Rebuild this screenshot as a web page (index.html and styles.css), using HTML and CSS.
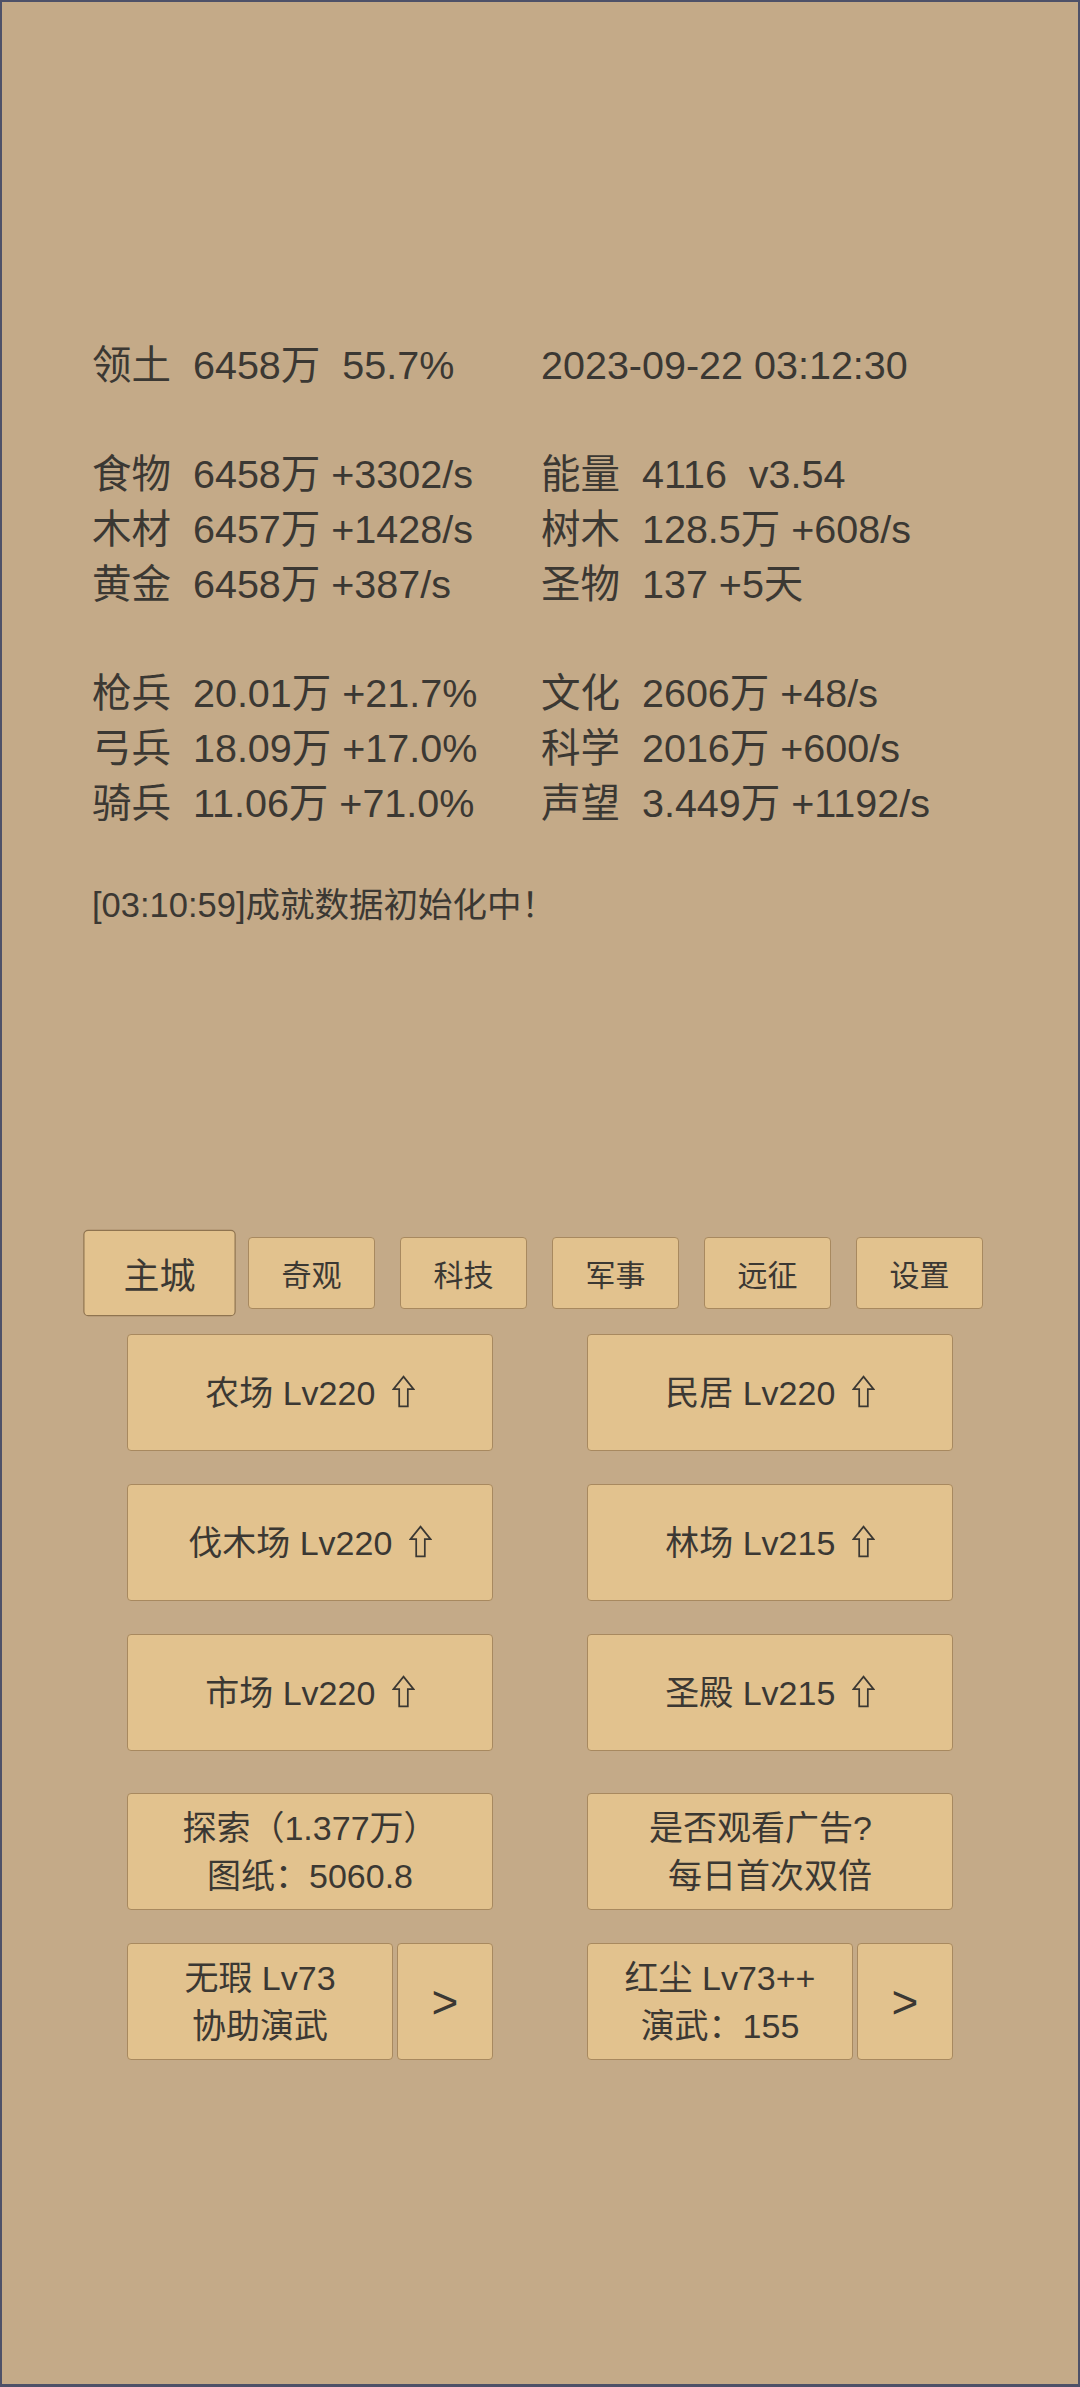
FILE: index.html
```html
<!DOCTYPE html>
<html lang="zh-CN">
<head>
  <meta charset="UTF-8">
  <meta name="viewport" content="width=device-width, initial-scale=1.0">
  <title>主城</title>
  <link rel="stylesheet" href="styles.css">
</head>
<body>
  <div class="frame">

    <section class="stats">
      <div class="group">
        <p>领土  6458万  55.7%</p>
        <p>2023-09-22 03:12:30</p>
      </div>
      <div class="group">
        <p>食物  6458万 +3302/s</p>
        <p>能量  4116  v3.54</p>
        <p>木材  6457万 +1428/s</p>
        <p>树木  128.5万 +608/s</p>
        <p>黄金  6458万 +387/s</p>
        <p>圣物  137 +5天</p>
      </div>
      <div class="group">
        <p>枪兵  20.01万 +21.7%</p>
        <p>文化  2606万 +48/s</p>
        <p>弓兵  18.09万 +17.0%</p>
        <p>科学  2016万 +600/s</p>
        <p>骑兵  11.06万 +71.0%</p>
        <p>声望  3.449万 +1192/s</p>
      </div>
      <p class="log">[03:10:59]成就数据初始化中！</p>
    </section>

    <nav class="tabs">
      <button class="tab active">主城</button>
      <button class="tab">奇观</button>
      <button class="tab">科技</button>
      <button class="tab">军事</button>
      <button class="tab">远征</button>
      <button class="tab">设置</button>
    </nav>

    <section class="grid buildings">
      <button class="btn">农场 Lv220 <svg class="up" viewBox="0 0 24 34"><path d="M12 1.5 L22.5 14.5 H16.5 V32.5 H7.5 V14.5 H1.5 Z"/></svg></button>
      <button class="btn">民居 Lv220 <svg class="up" viewBox="0 0 24 34"><path d="M12 1.5 L22.5 14.5 H16.5 V32.5 H7.5 V14.5 H1.5 Z"/></svg></button>
      <button class="btn">伐木场 Lv220 <svg class="up" viewBox="0 0 24 34"><path d="M12 1.5 L22.5 14.5 H16.5 V32.5 H7.5 V14.5 H1.5 Z"/></svg></button>
      <button class="btn">林场 Lv215 <svg class="up" viewBox="0 0 24 34"><path d="M12 1.5 L22.5 14.5 H16.5 V32.5 H7.5 V14.5 H1.5 Z"/></svg></button>
      <button class="btn">市场 Lv220 <svg class="up" viewBox="0 0 24 34"><path d="M12 1.5 L22.5 14.5 H16.5 V32.5 H7.5 V14.5 H1.5 Z"/></svg></button>
      <button class="btn">圣殿 Lv215 <svg class="up" viewBox="0 0 24 34"><path d="M12 1.5 L22.5 14.5 H16.5 V32.5 H7.5 V14.5 H1.5 Z"/></svg></button>
    </section>

    <section class="grid extras">
      <button class="btn">探索（1.377万）<br>图纸：5060.8</button>
      <button class="btn">是否观看广告?&nbsp;&nbsp;<br>每日首次双倍</button>
      <div class="pair">
        <button class="btn">无瑕 Lv73<br>协助演武</button>
        <button class="btn next">&gt;</button>
      </div>
      <div class="pair">
        <button class="btn">红尘 Lv73++<br>演武：155</button>
        <button class="btn next">&gt;</button>
      </div>
    </section>

  </div>
</body>
</html>
```

FILE: styles.css
```css
body {
  margin: 0;
  font-family: "Liberation Sans", "Noto Sans CJK SC", sans-serif;
  color: #3b3833;
}

.frame {
  box-sizing: border-box;
  height: 2387px;
  border: 2px solid #4e5168;
  border-bottom-width: 3px;
  background-color: #c4aa88;
}

.stats {
  padding: 336px 0 0 90px;
  font-size: 39.5px;
}

.group {
  display: grid;
  grid-template-columns: 449px auto;
}

.group + .group {
  margin-top: 54px;
}

.group p {
  margin: 0;
  line-height: 55px;
  white-space: pre;
}

.log {
  margin: 50px 0 0;
  font-size: 34.5px;
  line-height: 48px;
}

.tabs {
  display: flex;
  gap: 25px;
  margin-top: 308px;
  padding-left: 94px;
}

button {
  font: inherit;
  color: inherit;
  padding: 0;
  cursor: pointer;
}

.tab,
.btn {
  background-color: #e2c28e;
  border: 1px solid #a8895f;
  border-radius: 4px;
}

.tab {
  width: 127px;
  height: 72px;
  font-size: 30px;
}

.tab.active {
  transform: scale(1.2);
  border-color: #8f7450;
}

.grid {
  display: grid;
  grid-template-columns: 366px 366px;
  column-gap: 94px;
  row-gap: 33px;
  padding-left: 125px;
}

.buildings {
  margin-top: 25px;
}

.extras {
  margin-top: 42px;
}

.btn {
  height: 117px;
  font-size: 34px;
  line-height: 48px;
  text-align: center;
}

.up {
  width: 23px;
  height: 33px;
  margin-left: 7px;
  vertical-align: -3px;
  fill: none;
  stroke: #3b3833;
  stroke-width: 1.8;
  stroke-linejoin: miter;
}

.pair {
  display: flex;
  gap: 4px;
}

.pair .btn {
  flex: 1;
}

.pair .next {
  flex: 0 0 96px;
  font-size: 46px;
}
```
